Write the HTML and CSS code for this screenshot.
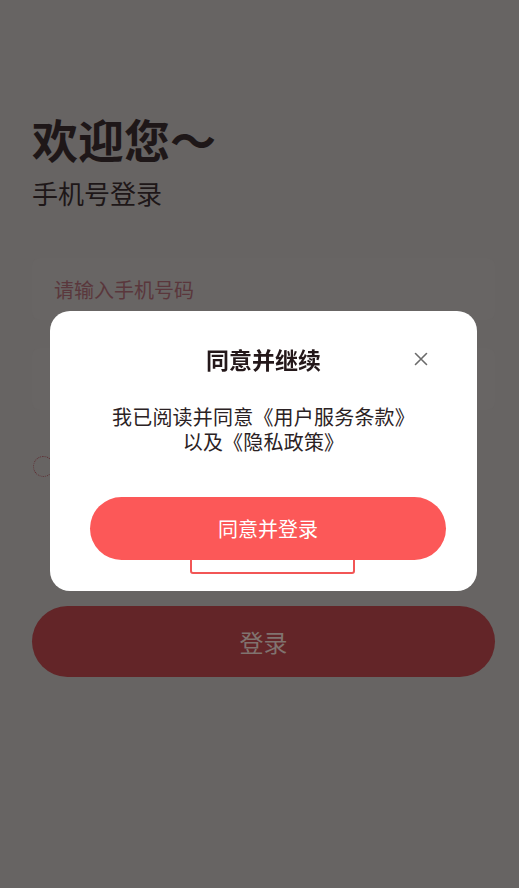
FILE: index.html
```html
<!DOCTYPE html>
<html lang="zh-CN">
<head>
<meta charset="utf-8">
<title>手机号登录</title>
<link rel="stylesheet" href="styles.css">
</head>
<body>
<main class="page">
  <h1 class="title">欢迎您～</h1>
  <p class="subtitle">手机号登录</p>
  <div class="field"><span class="placeholder">请输入手机号码</span></div>
  <div class="field field-second"></div>
  <div class="agree-row"><span class="check"></span></div>
  <button class="login" type="button">登录</button>
</main>

<div class="overlay">
  <section class="dialog">
    <header class="dialog-head">
      <h2 class="dialog-title">同意并继续</h2>
      <span class="close" aria-label="关闭">
        <svg viewBox="0 0 14 14" width="14" height="14"><path d="M1.5 1.5 L12.5 12.5 M12.5 1.5 L1.5 12.5" stroke="#6b6b6b" stroke-width="1.6" fill="none" stroke-linecap="round"/></svg>
      </span>
    </header>
    <div class="dialog-text">
      <p class="dialog-line">我已阅读并同意《用户服务条款》</p>
      <p class="dialog-line">以及《隐私政策》</p>
    </div>
    <button class="confirm" type="button">同意并登录</button>
    <div class="code-peek"></div>
  </section>
</div>
</body>
</html>
```

FILE: styles.css
```css
html, body {
  margin: 0;
  padding: 0;
}
body {
  width: 519px;
  height: 888px;
  background: #676463;
  font-family: "Noto Sans CJK SC", "Noto Sans", sans-serif;
  overflow: hidden;
}
.page {
  padding: 110px 24px 0 32px;
  display: flex;
  flex-direction: column;
}
.title {
  margin: 0;
  font-size: 46px;
  line-height: 56px;
  font-weight: 700;
  color: #1e1718;
}
.subtitle {
  margin: 10px 0 0;
  font-size: 26px;
  line-height: 34px;
  color: #1e1718;
}
.field {
  margin-top: 48px;
  height: 62px;
  border-radius: 8px;
  background: #686564;
  display: flex;
  align-items: center;
  padding-left: 22px;
}
.field-second {
  margin-top: 28px;
}
.placeholder {
  font-size: 20px;
  color: #5a373c;
}
.agree-row {
  margin-top: 45px;
  height: 22px;
  display: flex;
  align-items: center;
}
.check {
  width: 19px;
  height: 19px;
  border-radius: 50%;
  border: 1.5px dotted #5e2a30;
  margin-left: 1px;
}
.login {
  margin-top: 129px;
  height: 71px;
  border: none;
  border-radius: 36px;
  background: #632528;
  color: #80736f;
  font-family: inherit;
  font-size: 24px;
  padding: 0;
}

.overlay {
  position: fixed;
  inset: 0;
  padding: 311px 0 0 50px;
}
.dialog {
  width: 427px;
  height: 280px;
  box-sizing: border-box;
  background: #ffffff;
  border-radius: 20px;
  padding-top: 30px;
  display: flex;
  flex-direction: column;
}
.dialog-head {
  position: relative;
  height: 36px;
  display: flex;
  justify-content: center;
  align-items: center;
}
.dialog-title {
  margin: 0;
  font-size: 23px;
  line-height: 36px;
  font-weight: 700;
  color: #24181a;
}
.close {
  position: absolute;
  right: 49px;
  top: 11px;
  width: 14px;
  height: 14px;
  display: flex;
}
.dialog-text {
  margin-top: 27px;
  display: flex;
  flex-direction: column;
  align-items: center;
}
.dialog-line {
  margin: 0;
  font-size: 20px;
  line-height: 25px;
  height: 25px;
  color: #2b2224;
  letter-spacing: 0.2px;
}
.confirm {
  position: relative;
  z-index: 1;
  margin: 43px 0 0 40px;
  width: 356px;
  height: 63px;
  border: none;
  border-radius: 32px;
  background: #fc5858;
  color: #ffffff;
  font-family: inherit;
  font-size: 20px;
  padding: 0;
}
.code-peek {
  margin: -4px 0 0 140px;
  width: 165px;
  height: 18px;
  box-sizing: border-box;
  border: 2.5px solid #f25656;
  border-radius: 0 0 3px 3px;
  background: #ffffff;
}
```
